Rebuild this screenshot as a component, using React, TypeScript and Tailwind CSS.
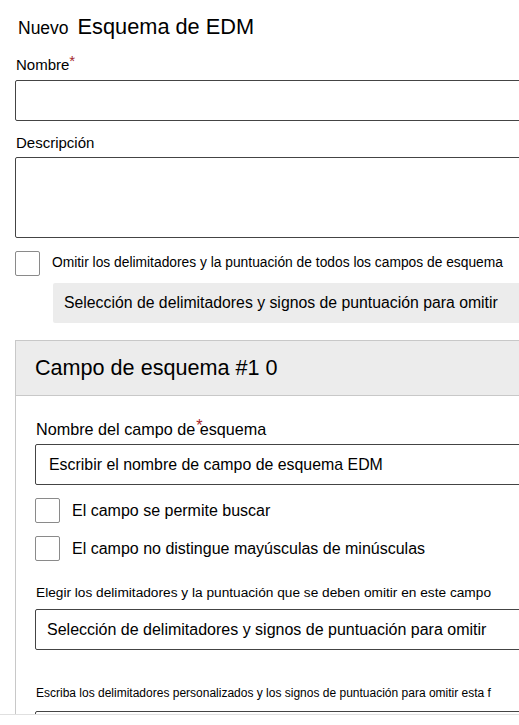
export default function App() {
  return (
    <div className="w-[519px] h-[725px] overflow-hidden bg-white text-black relative" style={{ fontFamily: '"Liberation Sans", Arial, sans-serif' }}>
      <div className="pl-[15px]">
        <div className="flex items-baseline h-[44px] pt-[16px]">
          <span className="text-[17.5px] ml-[3px] leading-none">Nuevo</span>
          <span className="text-[21.75px] ml-[9px] leading-none">Esquema de EDM</span>
        </div>
        <div className="mt-[12px] text-[15px] leading-[18px] ml-[1px]">
          Nombre<span className="text-[#a4262c] align-top text-[15px] leading-[10px]">*</span>
        </div>
        <div className="mt-[6px] h-[41px] w-[520px] border border-[#444] rounded-[2px]"></div>
        <div className="mt-[13px] text-[15px] leading-[18px] ml-[1px]">Descripción</div>
        <div className="mt-[5px] h-[81px] w-[520px] border border-[#444] rounded-[2px]"></div>
        <div className="mt-[13px] flex items-center">
          <div className="w-[25px] h-[25px] border border-[#8a8a8a] rounded-[2px] shrink-0"></div>
          <span className="ml-[12px] text-[13.8px] whitespace-nowrap">Omitir los delimitadores y la puntuación de todos los campos de esquema</span>
        </div>
        <div className="mt-[7px] ml-[38px] h-[40px] w-[480px] bg-[#ececec] rounded-[2px] flex items-center pl-[11px] text-[15.8px] whitespace-nowrap">
          Selección de delimitadores y signos de puntuación para omitir
        </div>
        <div className="mt-[17px] w-[520px] border-l border-t border-[#c8c8c8] h-[380px]">
          <div className="h-[55px] bg-[#ececec] border-b border-[#c8c8c8] flex items-center pl-[19px] text-[21.6px]">
            Campo de esquema #1 0
          </div>
          <div className="pl-[19px]">
            <div className="mt-[24px] text-[16.2px] leading-[18px] ml-[1px] whitespace-nowrap">
              Nombre del campo de<span className="text-[#a4262c] relative left-[1px] -top-[4px] inline-block w-0">*</span> esquema
            </div>
            <div className="mt-[6px] h-[41px] w-[500px] border border-[#444] rounded-[2px] flex items-center pl-[13px] text-[15.9px] whitespace-nowrap">
              Escribir el nombre de campo de esquema EDM
            </div>
            <div className="mt-[13px] flex items-center">
              <div className="w-[25px] h-[25px] border border-[#8a8a8a] rounded-[2px] shrink-0"></div>
              <span className="ml-[12px] text-[16px] whitespace-nowrap">El campo se permite buscar</span>
            </div>
            <div className="mt-[13px] flex items-center">
              <div className="w-[25px] h-[25px] border border-[#8a8a8a] rounded-[2px] shrink-0"></div>
              <span className="ml-[12px] text-[16px] whitespace-nowrap">El campo no distingue mayúsculas de minúsculas</span>
            </div>
            <div className="mt-[24px] text-[13.7px] leading-[16px] ml-[1px] whitespace-nowrap">
              Elegir los delimitadores y la puntuación que se deben omitir en este campo
            </div>
            <div className="mt-[8px] h-[41px] w-[500px] border border-[#444] rounded-[2px] flex items-center pl-[11px] text-[16px] whitespace-nowrap">
              Selección de delimitadores y signos de puntuación para omitir
            </div>
            <div className="mt-[36px] text-[12px] leading-[15px] ml-[1px] whitespace-nowrap">
              Escriba los delimitadores personalizados y los signos de puntuación para omitir esta f
            </div>
            <div className="mt-[10px] h-[41px] w-[500px] border border-[#444] rounded-[2px]"></div>
          </div>
        </div>
      </div>
      <div className="absolute left-0 right-0 top-[714px] bottom-0 bg-white border-t border-[#e0e0e0]"></div>
    </div>
  );
}
